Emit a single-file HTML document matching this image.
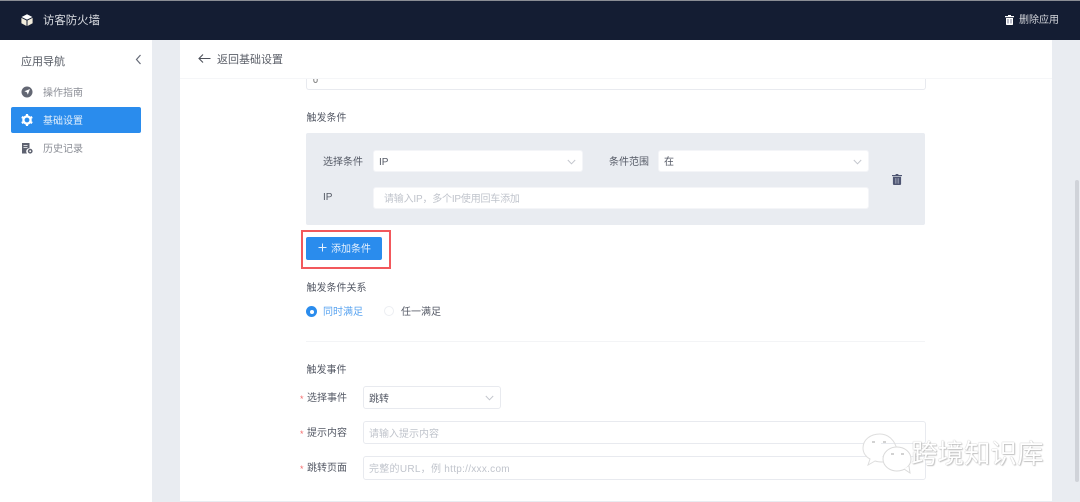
<!DOCTYPE html>
<html lang="zh"><head><meta charset="utf-8">
<style>
html,body{margin:0;padding:0}
body{width:1080px;height:502px;overflow:hidden;position:relative;background:#e9ecf1;font-family:"Liberation Sans","Noto Sans CJK SC",sans-serif;font-size:10px;color:#555a66}
.a{position:absolute;white-space:nowrap}
.t{line-height:14px;height:14px;filter:blur(.25px)}
.box{position:absolute;box-sizing:border-box;background:#fff;border:1px solid #e8eaef;border-radius:3px}
.nb{border-color:#f4f5f8}
.ph{color:#c0c4cc}
</style></head><body>
<div class="a" style="left:0;top:0;width:1080px;height:40px;background:#141d33"></div>
<div class="a" style="left:0;top:0;width:1080px;height:1px;background:#8a8d94"></div>
<svg class="a" style="left:21px;top:14px" width="12" height="12" viewBox="0 0 12 12"><path d="M6 .2 11.400 3 6 5.600.6 3z" fill="#fff"/><path d="M.4 3.900 5.500 6.500V12L.4 9.200zM11.600 3.900 6.500 6.500V12l5.100-2.800z" fill="#f2ecdc"/></svg>
<div class="a t" style="left:43px;top:13.500px;color:#dcdee3;font-size:11.400px">访客防火墙</div>
<svg class="a" style="left:1005px;top:15px" width="9" height="10" viewBox="0 0 9 10"><path d="M3 0h3v1h3v1.200H0V1h3zM1 3h7v6.200a.8.8 0 0 1-.8.8H1.800a.8.8 0 0 1-.8-.8z" fill="#fff"/><path d="M3 4v4.500M6 4v4.500" stroke="#8f92a8" stroke-width="1.200"/></svg>
<div class="a t" style="left:1019px;top:14px;color:#d5d7dc;font-size:10px">删除应用</div>

<div class="a" style="left:0;top:40px;width:152px;height:462px;background:#fff"></div>
<div class="a t" style="left:21px;top:54.500px;font-size:11px;color:#555a63">应用导航</div>
<svg class="a" style="left:135px;top:54px" width="7" height="11" viewBox="0 0 7 11"><path d="M5.500 1 1.500 5.500l4 4.500" fill="none" stroke="#666b78" stroke-width="1.200"/></svg>
<svg class="a" style="left:21px;top:86px" width="12" height="12" viewBox="0 0 12 12"><circle cx="6" cy="6" r="5.500" fill="#636773"/><path d="M9 3 6.800 8.600 5.800 6.200 3.400 5.200z" fill="#fff"/></svg>
<div class="a t" style="left:43px;top:87px;color:#8b8e96;font-size:10px">操作指南</div>
<div class="a" style="left:11px;top:107px;width:130px;height:26px;background:#2a8ced;border-radius:2px"></div>
<svg class="a" style="left:21px;top:114px" width="12" height="12" viewBox="0 0 12 12"><circle cx="6" cy="6" r="3.600" fill="none" stroke="#fff" stroke-width="2.400"/><path d="M6 0v2M6 10v2M.8 3l1.700 1M9.500 8l1.700 1M.8 9l1.700-1M9.500 4l1.700-1" stroke="#fff" stroke-width="2.200"/></svg>
<div class="a t" style="left:43px;top:115px;color:#e2effc;font-size:10px">基础设置</div>
<svg class="a" style="left:22px;top:143px" width="11" height="11" viewBox="0 0 11 11"><path d="M0 0h7.500v5.200A3.200 3.200 0 0 0 5 10.500H0z" fill="#5e6270"/><circle cx="8.200" cy="8.200" r="2.400" fill="#5e6270"/><circle cx="8.200" cy="8.200" r=".9" fill="#fff"/><path d="M1.500 2.500h4M1.500 4.500h4" stroke="#fff" stroke-width=".8"/></svg>
<div class="a t" style="left:43px;top:143px;color:#8b8e96;font-size:10px">历史记录</div>

<div class="a" style="left:180px;top:40px;width:872px;height:461px;background:#fff"></div>
<div class="a" style="left:180px;top:78px;width:872px;height:1px;background:#f5f6f8"></div>
<svg class="a" style="left:198px;top:53px" width="13" height="11" viewBox="0 0 13 11"><path d="M12.500 5.500H1M5 1.500l-4 4 4 4" fill="none" stroke="#4d515a" stroke-width="1.100"/></svg>
<div class="a t" style="left:217px;top:52.500px;font-size:11px;color:#5b5f68">返回基础设置</div>

<div class="box" style="left:306px;top:79px;width:620px;height:11px;border-top:0;border-radius:0 0 3px 3px"></div>
<svg class="a" style="left:313px;top:79px" width="5" height="4" viewBox="0 0 5 4"><path d="M.8 0v1.500C.8 2.800 1.500 3.400 2.500 3.400S4.200 2.800 4.200 1.500V0" fill="none" stroke="#777" stroke-width=".9"/></svg>

<div class="a t" style="left:306.500px;top:111.500px;font-size:10px">触发条件</div>
<div class="a" style="left:306px;top:133px;width:619px;height:92px;background:#e9ecf1;border-radius:2px"></div>
<div class="a t" style="left:323px;top:155.500px">选择条件</div>
<div class="box nb" style="left:373px;top:150px;width:210px;height:22px"></div>
<div class="a t" style="left:379px;top:155.500px;color:#555a66">IP</div>
<svg class="a" style="left:567px;top:159px" width="9" height="6" viewBox="0 0 9 6"><path d="M.8 1 4.500 4.800 8.200 1" fill="none" stroke="#c3c6cd" stroke-width="1"/></svg>
<div class="a t" style="left:609px;top:155.500px">条件范围</div>
<div class="box nb" style="left:658px;top:150px;width:211px;height:22px"></div>
<div class="a t" style="left:664px;top:155.500px">在</div>
<svg class="a" style="left:853px;top:159px" width="9" height="6" viewBox="0 0 9 6"><path d="M.8 1 4.500 4.800 8.200 1" fill="none" stroke="#c3c6cd" stroke-width="1"/></svg>
<div class="a t" style="left:323px;top:191px">IP</div>
<div class="box nb" style="left:373px;top:187px;width:496px;height:22px"></div>
<div class="a t ph" style="left:384px;top:192.500px;letter-spacing:-.2px">请输入IP，多个IP使用回车添加</div>
<svg class="a" style="left:892px;top:174px" width="10" height="11" viewBox="0 0 11 12"><path d="M4 0h3v1h4v1.300H0V1h4zM1 3h9v8a1 1 0 0 1-1 1H2a1 1 0 0 1-1-1z" fill="#4f5673"/><path d="M3.700 4.500v6M5.500 4.500v6M7.300 4.500v6" stroke="#a6abbd" stroke-width=".7"/></svg>

<div class="a" style="left:301px;top:230px;width:90px;height:39px;box-sizing:border-box;border:2px solid #f2585c"></div>
<div class="a" style="left:306px;top:237px;width:76px;height:23px;background:#2a8ced;border-radius:2px"></div>
<svg class="a" style="left:318px;top:243px" width="9" height="9" viewBox="0 0 9 9"><path d="M4.500.5v8M.5 4.500h8" stroke="#e6f1fd" stroke-width="1"/></svg>
<div class="a t" style="left:331px;top:242.500px;color:#e6f1fd">添加条件</div>

<div class="a t" style="left:306.500px;top:281.500px">触发条件关系</div>
<div class="a" style="left:306px;top:306px;width:11px;height:11px;border-radius:50%;background:#2a8ced"></div>
<div class="a" style="left:309.500px;top:309.500px;width:4px;height:4px;border-radius:50%;background:#fff"></div>
<div class="a t" style="left:323px;top:306px;color:#5aa4f0">同时满足</div>
<div class="a" style="left:384px;top:306px;width:10px;height:10px;box-sizing:border-box;border-radius:50%;border:1px solid #eceef2;background:#fff"></div>
<div class="a t" style="left:401px;top:306px">任一满足</div>
<div class="a" style="left:306px;top:341px;width:619px;height:1px;background:#f3f4f6"></div>

<div class="a t" style="left:306.500px;top:364px">触发事件</div>
<div class="a t" style="left:300px;top:391.500px;color:#f56c6c;font-size:9px">*</div>
<div class="a t" style="left:307px;top:391.500px">选择事件</div>
<div class="box" style="left:363px;top:386px;width:138px;height:23px"></div>
<div class="a t" style="left:369px;top:392.500px">跳转</div>
<svg class="a" style="left:485px;top:395px" width="9" height="6" viewBox="0 0 9 6"><path d="M.8 1 4.500 4.800 8.200 1" fill="none" stroke="#c3c6cd" stroke-width="1"/></svg>
<div class="a t" style="left:300px;top:426.500px;color:#f56c6c;font-size:9px">*</div>
<div class="a t" style="left:307px;top:426.500px">提示内容</div>
<div class="box" style="left:363px;top:421px;width:563px;height:23px"></div>
<div class="a t ph" style="left:369px;top:427.500px">请输入提示内容</div>
<div class="a t" style="left:300px;top:461.500px;color:#f56c6c;font-size:9px">*</div>
<div class="a t" style="left:307px;top:461.500px">跳转页面</div>
<div class="box" style="left:363px;top:456px;width:563px;height:24px"></div>
<div class="a t ph" style="left:369px;top:462.500px;letter-spacing:.28px">完整的URL，例 http://xxx.com</div>

<div class="a" style="left:1075px;top:180px;width:4px;height:302px;background:#d0d3d9;border-radius:2px"></div>

<svg class="a" style="left:860px;top:430px" width="70" height="45" viewBox="0 0 70 45"><path d="M20 4C10 4 3 10 3 18c0 5 3 9 7 11l-2 6 7-4c3 1 6 1 8 1" fill="#fff" stroke="#dedede" stroke-width="1"/><path d="M37 20C35 10 28 4 20 4" fill="none" stroke="#dedede"/><ellipse cx="37" cy="29" rx="14" ry="12" fill="#fff" stroke="#dadada"/><path d="M44 39l6 4-1-7" fill="#fff" stroke="#dadada"/><path d="M12 12h3M23 12h3M31 24h3M41 24h3" stroke="#c4c4c4" stroke-width="1.500"/></svg>
<div class="a" style="left:911px;top:438px;font-size:26.500px;line-height:32px;color:#fff;text-shadow:0 0 1px #999,1px 1px 1px #ccc">跨境知识库</div>
</body></html>
